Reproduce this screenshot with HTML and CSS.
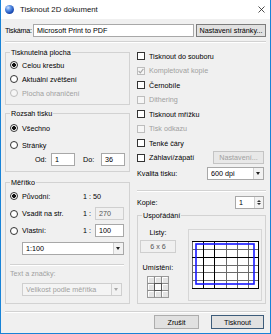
FILE: index.html
```html
<!DOCTYPE html>
<html lang="cs">
<head>
<meta charset="utf-8">
<title>Tisknout 2D dokument</title>
<link rel="stylesheet" href="styles.css">
</head>
<body>
<div class="win">
  <div class="titlebar">
    <span class="appicon"></span>
    <span class="title">Tisknout 2D dokument</span>
    <svg class="close" width="7" height="7" viewBox="0 0 7 7"><path d="M0.5 0.5 L6.5 6.5 M6.5 0.5 L0.5 6.5" stroke="#222" stroke-width="0.8" fill="none"/></svg>
  </div>
  <div class="body">
    <div class="printer-row">
      <span class="plabel">Tiskárna:</span>
      <div class="field printer">Microsoft Print to PDF</div>
      <div class="btn setup">Nastavení stránky...</div>
    </div>
    <div class="sep"></div>
    <div class="cols">
      <div class="col-left">
        <fieldset class="group g1">
          <legend>Tisknutelná plocha</legend>
          <div class="gin">
            <div class="opt"><span class="radio on"></span>Celou kresbu</div>
            <div class="opt"><span class="radio"></span>Aktuální zvětšení</div>
            <div class="opt dis"><span class="radio"></span>Plocha ohraničení</div>
          </div>
        </fieldset>
        <fieldset class="group g2">
          <legend>Rozsah tisku</legend>
          <div class="gin">
            <div class="opt r1"><span class="radio on"></span>Všechno</div>
            <div class="opt r2"><span class="radio"></span>Stránky</div>
            <div class="range">
              <span class="rl od">Od:</span>
              <div class="field small">1</div>
              <span class="rl do">Do:</span>
              <div class="field small">36</div>
            </div>
          </div>
        </fieldset>
        <fieldset class="group g3">
          <legend>Měřítko</legend>
          <div class="gin">
            <div class="srow s1"><span class="lab"><span class="radio on"></span>Původní:</span><span>1 : 50</span></div>
            <div class="srow s2"><span class="lab"><span class="radio"></span>Vsadit na str.</span><span class="one">1 :</span><div class="field num off">270</div></div>
            <div class="srow s3"><span class="lab"><span class="radio"></span>Vlastní:</span><span class="one">1 :</span><div class="field num">100</div></div>
            <div class="dd dd1"><span class="ddtext">1:100</span><span class="arrow"></span></div>
            <div class="gsep"></div>
            <div class="tlabel">Text a značky:</div>
            <div class="dd dd2 off"><span class="ddtext">Velikost podle měřítka</span><span class="arrow"></span></div>
          </div>
        </fieldset>
      </div>
      <div class="col-right">
        <div class="chk a"><span class="box"></span>Tisknout do souboru</div>
        <div class="chk b dis"><span class="box"><svg width="6" height="6" viewBox="0 0 6 6"><path d="M0.6 3 L2.3 4.8 L5.4 0.9" stroke="#a8a8a8" stroke-width="1.1" fill="none"/></svg></span>Kompletovat kopie</div>
        <div class="chk a"><span class="box"></span>Černobíle</div>
        <div class="chk b dis"><span class="box"></span>Dithering</div>
        <div class="chk a"><span class="box"></span>Tisknout mřížku</div>
        <div class="chk b dis"><span class="box"></span>Tisk odkazu</div>
        <div class="chk a"><span class="box"></span>Tenké čáry</div>
        <div class="chk b"><span class="box"></span>Záhlaví/zápatí<div class="btn off small-btn">Nastavení...</div></div>
        <div class="qrow"><span>Kvalita tisku:</span><div class="dd dd3"><span class="ddtext">600 dpi</span><span class="arrow"></span></div></div>
        <div class="sep rsep"></div>
        <div class="krow"><span>Kopie:</span><div class="spin"><span class="ddtext">1</span><span class="spbtn"><span class="up"></span><span class="down"></span></span></div></div>
        <fieldset class="group g4">
          <legend>Uspořádání</legend>
          <div class="gin g4in">
            <div class="sheets">
              <div class="sl">Listy:</div>
              <div class="field off sheetval">6 x 6</div>
              <div class="sl place">Umístění:</div>
              <svg class="placeicon" width="22" height="22" viewBox="0 0 22 22">
                <rect x="0.5" y="0.5" width="21" height="21" fill="#e4e4e4" stroke="#9a9a9a"/>
                <path d="M7.5 0.5 V21.5 M14.5 0.5 V21.5 M0.5 7.5 H21.5 M0.5 14.5 H21.5" stroke="#8a8a8a" stroke-width="1"/>
                <path d="M1.5 6.5 V1.5 H6.5 M8.5 6.5 V1.5 H13.5 M15.5 6.5 V1.5 H20.5 M1.5 13.5 V8.5 H6.5 M15.5 13.5 V8.5 H20.5 M1.5 20.5 V15.5 H6.5 M8.5 20.5 V15.5 H13.5 M15.5 20.5 V15.5 H20.5" stroke="#fff" stroke-width="1" fill="none"/>
                <rect x="7.5" y="7.5" width="7" height="7" fill="#fbfbfb" stroke="#555"/>
              </svg>
            </div>
            <div class="preview">
              <svg width="72" height="70" viewBox="0 0 72 70">
                <rect x="3" y="11" width="66" height="47" fill="#fff"/>
                <g stroke="#6a6a6a" stroke-width="1">
                  <path d="M3.5 11 V58 M37.5 11 V58 M48.5 11 V58 M59.5 11 V58"/>
                  <path d="M3 19.5 H69 M3 35.5 H69 M3 42.5 H69 M3 50.5 H69"/>
                </g>
                <g stroke="#000" stroke-width="1">
                  <path d="M14.5 11 V58 M25.5 11 V58 M69.5 11 V58.5"/>
                  <path d="M3 11.5 H70 M3 27.5 H70 M3 58.5 H70"/>
                </g>
                <rect x="7" y="14" width="58" height="40" fill="none" stroke="#1616ff" stroke-width="1.6"/>
              </svg>
            </div>
          </div>
        </fieldset>
      </div>
    </div>
    <div class="sep bsep"></div>
    <div class="buttons">
      <div class="btn cancel">Zrušit</div>
      <div class="btn ok">Tisknout</div>
    </div>
  </div>
</div>
</body>
</html>
```
FILE: styles.css
```css
* { box-sizing: border-box; }
body {
  margin: 0;
  font-family: "Liberation Sans", Arial, sans-serif;
  font-size: 7.2px;
  color: #000;
  background: #fff;
}
.win {
  width: 271px;
  height: 334px;
  border: 1px solid #1883d7;
  border-top: none;
  background: #f0f0f0;
  display: flex;
  flex-direction: column;
}
.titlebar {
  height: 19px;
  flex: none;
  background: #fff;
  display: flex;
  align-items: center;
  padding: 0 5px 0 4px;
}
.appicon {
  width: 9px;
  height: 9px;
  border-radius: 50%;
  background: radial-gradient(circle at 35% 30%, #cfe3ff 0, #5e95e8 30%, #1d4fb8 65%, #0b2a78 100%);
}
.title {
  margin-left: 6px;
  font-size: 7.8px;
  color: #111;
}
.close { margin-left: auto; }

.body {
  flex: 1;
  display: flex;
  flex-direction: column;
  padding: 0 4px;
}
.printer-row {
  margin-top: 5px;
  height: 13px;
  display: flex;
  align-items: center;
}
.plabel { width: 28px; letter-spacing: -0.3px; white-space: nowrap; }
.field {
  height: 13px;
  background: #fff;
  border: 1px solid #a8a8a8;
  display: flex;
  align-items: center;
  padding-left: 3px;
  white-space: nowrap;
  overflow: hidden;
}
.field.off { background: #f0f0f0; border-color: #cfcfcf; color: #555; }
.printer { width: 161px; margin-right: 2px; }
.btn {
  height: 13px;
  background: #e1e1e1;
  border: 1px solid #7c7c7c;
  display: flex;
  align-items: center;
  justify-content: center;
  white-space: nowrap;
}
.btn.off { color: #a0a0a0; border-color: #c4c4c4; background: #e8e8e8; }
.setup { width: 70px; }
.sep {
  height: 2px;
  border-top: 1px solid #d2d2d2;
  border-bottom: 1px solid #fff;
  margin-top: 4px;
  flex: none;
}
.cols {
  display: grid;
  grid-template-columns: 125px 129px;
  column-gap: 7px;
}
.col-left, .col-right { display: flex; flex-direction: column; }

.group {
  margin: 0;
  padding: 0;
  border: 1px solid #d2d2d2;
  min-width: 0;
}
.group legend {
  margin-left: 4px;
  padding: 0 1px;
  height: 11px;
  line-height: 11px;
}
.g1 { margin-top: 4px; height: 58px; }
.g2 { margin-top: 3px; height: 64px; }
.g3 { margin-top: 5px; height: 127px; }

.gin { padding-left: 4px; }
.opt {
  height: 14px;
  display: flex;
  align-items: center;
}
.g2 .r1 { margin-top: 2px; }
.g2 .r2 { margin-top: 3px; }
.dis { color: #a0a0a0; }
.radio {
  width: 8px;
  height: 8px;
  border-radius: 50%;
  border: 1px solid #333;
  background: #fff;
  margin-right: 4px;
  flex: none;
}
.radio.on { background: radial-gradient(circle, #111 0 1.7px, #fff 2.2px); }
.dis .radio { border-color: #bdbdbd; background: #f6f6f6; }

.range {
  margin-top: 1px;
  height: 13px;
  display: flex;
  align-items: center;
}
.rl { width: 16px; }
.rl.od { margin-left: 25px; }
.rl.do { margin-left: 8px; width: 18px; }
.field.small { width: 24px; }

.srow { display: flex; align-items: center; height: 13px; }
.s1 { margin-top: 1px; height: 14px; }
.s2 { margin-top: 4px; }
.s3 { margin-top: 4px; }
.lab { width: 73px; display: flex; align-items: center; }
.one { width: 12px; }
.field.num { width: 29px; }

.dd {
  height: 13px;
  background: #fff;
  border: 1px solid #a8a8a8;
  display: flex;
  align-items: center;
  padding-left: 3px;
  white-space: nowrap;
}
.ddtext { flex: 1; overflow: hidden; }
.arrow {
  width: 10px;
  height: 11px;
  border-left: 1px solid #d0d0d0;
  background: #f2f2f2;
  position: relative;
  flex: none;
}
.arrow::after {
  content: "";
  position: absolute;
  left: 2px;
  top: 4px;
  border-left: 2.5px solid transparent;
  border-right: 2.5px solid transparent;
  border-top: 3px solid #222;
}
.dd1 { margin-top: 5px; margin-left: 12px; width: 102px; }
.gsep {
  margin-top: 9px;
  width: 114px;
  height: 2px;
  border-top: 1px solid #d2d2d2;
  border-bottom: 1px solid #fff;
}
.tlabel { margin-top: 2px; height: 12px; line-height: 12px; color: #a0a0a0; }
.dd2 { margin-top: 3px; margin-left: 12px; width: 100px; color: #a0a0a0; background: #f4f4f4; border-color: #cfcfcf; }
.dd2 .arrow::after { border-top-color: #a8a8a8; }

.chk { display: flex; align-items: center; height: 14px; white-space: nowrap; }
.chk.b { height: 15px; }
.col-right .chk:first-child { margin-top: 6px; }
.box {
  width: 8px;
  height: 8px;
  border: 1px solid #333;
  background: #fff;
  margin-right: 4px;
  flex: none;
  display: flex;
  align-items: center;
  justify-content: center;
}
.dis .box { border-color: #bdbdbd; background: #f6f6f6; }
.small-btn { margin-left: auto; margin-right: 2px; width: 51px; }

.qrow { margin-top: 1px; height: 14px; display: flex; align-items: center; }
.dd3 { margin-left: auto; margin-right: 2px; width: 57px; }
.rsep { margin-top: 10px; }
.krow { margin-top: 4px; height: 13px; display: flex; align-items: center; }
.spin {
  margin-left: auto;
  margin-right: 2px;
  width: 29px;
  height: 13px;
  background: #fff;
  border: 1px solid #a8a8a8;
  display: flex;
  align-items: center;
  padding-left: 3px;
}
.spbtn {
  width: 9px;
  height: 11px;
  background: #f2f2f2;
  border-left: 1px solid #d0d0d0;
  display: flex;
  flex-direction: column;
  align-items: center;
  justify-content: center;
  gap: 1px;
}
.up { border-left: 2px solid transparent; border-right: 2px solid transparent; border-bottom: 2px solid #333; }
.down { border-left: 2px solid transparent; border-right: 2px solid transparent; border-top: 2px solid #333; }

.g4 { margin-top: 1px; height: 94px; }
.g4in { display: flex; padding-left: 2px; }
.sheets { width: 36px; display: flex; flex-direction: column; align-items: center; }
.sl { margin-top: 6px; height: 12px; line-height: 12px; }
.sl.place { margin-top: 9px; }
.sheetval { margin-top: 1px; width: 36px; justify-content: center; padding-left: 0; }
.placeicon { margin-top: 2px; }
.preview {
  margin-left: 12px;
  margin-top: 8px;
  width: 74px;
  height: 72px;
  border: 1px solid #d6d6d6;
}
.preview svg { display: block; }

.bsep { margin-top: 7px; }
.buttons {
  margin-top: 2px;
  height: 14px;
  display: flex;
  justify-content: flex-end;
  padding-right: 2px;
}
.cancel { width: 45px; height: 14px; border-color: #adadad; }
.ok { width: 53px; height: 14px; margin-left: 12px; border-color: #3d5c7a; }
```
